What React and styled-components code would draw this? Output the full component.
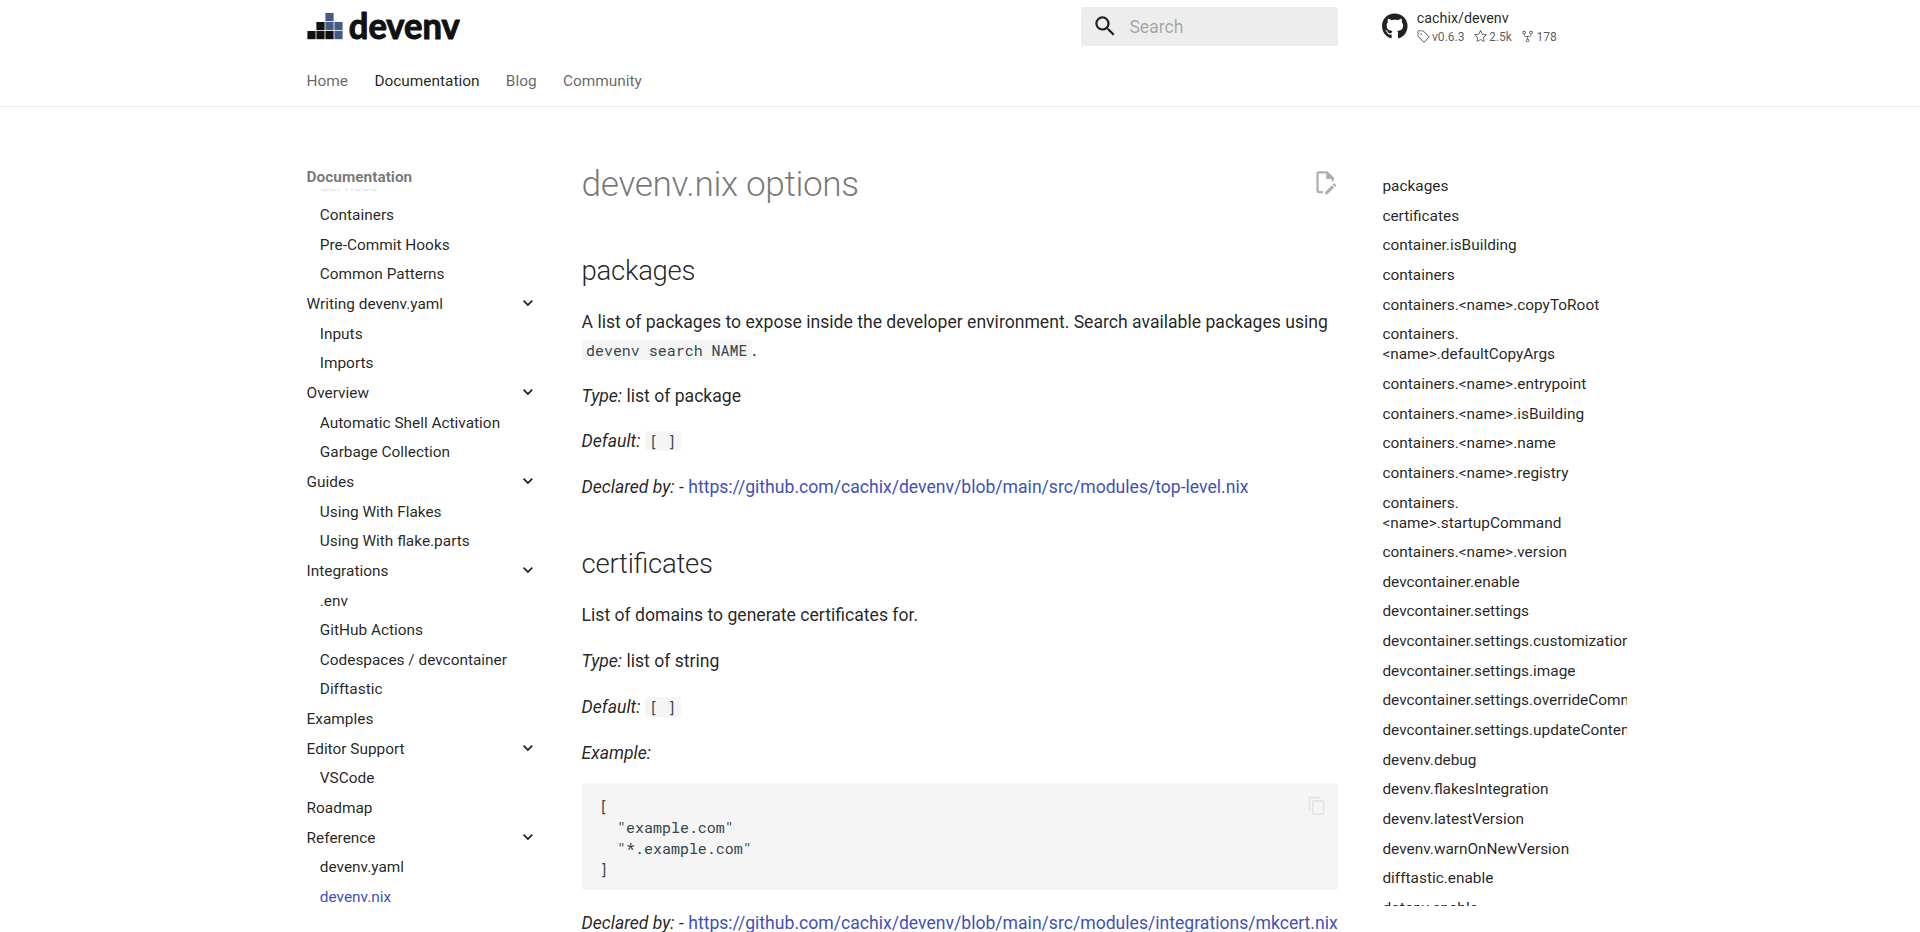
import React from "react";
import styled, { createGlobalStyle, css } from "styled-components";
import { FaGithub } from "react-icons/fa";
import { GoTag, GoStar, GoRepoForked } from "react-icons/go";

const GlobalStyle = createGlobalStyle`
  html { font-size: 22px; }
  body {
    margin: 0;
    height: 932px;
    overflow: hidden;
    background: #fff;
    color: rgba(0, 0, 0, 0.87);
    font-family: Roboto, "Liberation Sans", sans-serif;
    font-feature-settings: "kern", "liga";
    -webkit-font-smoothing: antialiased;
  }
  *, *::before, *::after { box-sizing: border-box; }
  a { color: inherit; text-decoration: none; }
`;

const Page = styled.div`
  height: 932px;
  overflow: hidden;
`;

const Grid = styled.div`
  width: 61rem;
  margin: 0 auto;
`;

const Header = styled.header`
  height: 4.8rem;
  box-shadow: 0 0.05rem 0 rgba(0, 0, 0, 0.07);
`;

const HeaderBar = styled(Grid)`
  display: flex;
  align-items: center;
  height: 2.4rem;
  padding: 0 0.8rem;
`;

const Logo = styled.svg`
  display: block;
  width: 164px;
  height: 36px;
  margin-right: auto;
  overflow: visible;
`;

const LogoText = styled.text`
  font-family: Lato, sans-serif;
  font-weight: 700;
  font-size: 36px;
  fill: #111;
  stroke: #111;
  stroke-width: 1.1px;
  stroke-linejoin: round;
`;

const SearchBox = styled.div`
  display: flex;
  align-items: center;
  width: 11.7rem;
  height: 1.8rem;
  padding-left: 0.5rem;
  gap: 0.5rem;
  border-radius: 0.1rem;
  background: rgba(0, 0, 0, 0.07);
  font-size: 0.8rem;
  color: rgba(0, 0, 0, 0.32);
`;

const Placeholder = styled.span`
  padding-top: 0.4px;
`;

const Icon = styled.svg`
  display: block;
  flex: none;
  width: ${(p) => p.$size || "1.2rem"};
  height: ${(p) => p.$size || "1.2rem"};
  fill: ${(p) => p.$color || "rgba(0, 0, 0, 0.87)"};
`;

const Source = styled.a`
  display: flex;
  align-items: center;
  width: 10.6rem;
  margin-left: 2rem;
  margin-right: -0.1rem;
  gap: 0.4rem;
  svg.mark { width: 25.6px; height: 26.4px; }
`;

const Repo = styled.div`
  padding-top: 2px;
`;

const RepoName = styled.div`
  font-size: 0.65rem;
  line-height: 18px;
`;

const Facts = styled.ul`
  display: flex;
  gap: 0.42rem;
  margin: 1px 0 -1px;
  padding: 0;
  list-style: none;
  font-size: 0.55rem;
  line-height: 18px;
  opacity: 0.75;
`;

const Fact = styled.li`
  display: flex;
  align-items: center;
  svg { width: 0.6rem; height: 0.6rem; margin-right: 2px; margin-top: -2px; }
`;

const Tabs = styled(Grid)`
  display: flex;
  gap: 1.2rem;
  height: 2.4rem;
  padding: 0 0.8rem;
`;

const Tab = styled.a`
  margin-top: calc(0.8rem + 1px);
  font-size: 0.7rem;
  line-height: 1.3;
  opacity: ${(p) => (p.$active ? 1 : 0.7)};
`;

const Main = styled(Grid)`
  display: flex;
  height: calc(932px - 4.8rem);
  padding-top: 1.5rem;
`;

const Sidebar = styled.aside`
  flex: none;
  width: 12.1rem;
  padding: 1.2rem 0.2rem 1.2rem 0.8rem;
  font-size: 0.7rem;
  line-height: 1.3;
`;

const SidebarScroll = styled.nav`
  height: 741px;
  padding-top: 1.5px;
  overflow: hidden;
`;

const NavTitle = styled.div`
  position: relative;
  z-index: 1;
  padding-top: 1px;
  background: #fff;
  box-shadow: 0 0 0.4rem 0.3rem #fff;
  font-weight: 700;
  color: rgba(0, 0, 0, 0.54);
`;

const NavList = styled.ul`
  margin: ${(p) => (p.$scrolled ? "-21.6px 0 0" : 0)};
  padding: 0;
  list-style: none;
`;

const NavItem = styled.li`
  display: flex;
  justify-content: space-between;
  margin-top: 0.625em;
  padding: 0 0.6rem 0 ${(p) => (p.$nested ? "0.6rem" : 0)};
  ${(p) => p.$active && css`color: #4051b5;`}
`;

const Chevron = styled(Icon)`
  margin-top: -0.7px;
  transform: rotate(90deg);
`;

const TocItem = styled.li`
  width: 10.7rem;
  margin-top: 0.625em;
`;

const Article = styled.article`
  flex: 1;
  min-width: 0;
  padding: calc(1rem + 1.3px) 1.2rem 0;
  font-size: 0.8rem;
  line-height: 1.6;
`;

const TitleRow = styled.div`
  display: flex;
  justify-content: space-between;
  align-items: flex-start;
  svg { margin-top: 0.34rem; }
`;

const Title = styled.h1`
  margin: 0;
  font-size: 2em;
  font-weight: 300;
  line-height: 1.3;
  letter-spacing: -0.01em;
  color: rgba(0, 0, 0, 0.54);
`;

const Section = styled.h2`
  margin: 1.6em 0 0.64em;
  font-size: 1.5625em;
  font-weight: 300;
  line-height: 1.4;
  letter-spacing: -0.01em;
`;

const Text = styled.p`
  margin: 1em 0;
`;

const Link = styled.a`
  && { color: #4051b5; }
`;

const mono = css`
  font-family: "Roboto Mono", "DejaVu Sans Mono", monospace;
  font-size: 0.85em;
  color: #36464e;
  background: #f5f5f5;
  border-radius: 0.1rem;
`;

const Code = styled.code`
  ${mono}
  padding: 0 0.294em;
`;

const CodeBlock = styled.div`
  ${mono}
  display: flex;
  justify-content: space-between;
  align-items: flex-start;
  margin: -1.2px 0 calc(1.176em + 1.6px);
  padding: 0.772em 0.8em 0.772em 1.176em;
  line-height: 1.4;
  svg { margin-top: 1px; }
`;

const Pre = styled.pre`
  margin: 1.4px 0 -1.4px;
  font: inherit;
`;

const NAV = [
  { label: "Services", nested: true },
  { label: "Containers", nested: true },
  { label: "Pre-Commit Hooks", nested: true },
  { label: "Common Patterns", nested: true },
  { label: "Writing devenv.yaml", open: true },
  { label: "Inputs", nested: true },
  { label: "Imports", nested: true },
  { label: "Overview", open: true },
  { label: "Automatic Shell Activation", nested: true },
  { label: "Garbage Collection", nested: true },
  { label: "Guides", open: true },
  { label: "Using With Flakes", nested: true },
  { label: "Using With flake.parts", nested: true },
  { label: "Integrations", open: true },
  { label: ".env", nested: true },
  { label: "GitHub Actions", nested: true },
  { label: "Codespaces / devcontainer", nested: true },
  { label: "Difftastic", nested: true },
  { label: "Examples" },
  { label: "Editor Support", open: true },
  { label: "VSCode", nested: true },
  { label: "Roadmap" },
  { label: "Reference", open: true },
  { label: "devenv.yaml", nested: true },
  { label: "devenv.nix", nested: true, active: true },
];

const TOC = [
  "packages",
  "certificates",
  "container.isBuilding",
  "containers",
  "containers.<name>.copyToRoot",
  "containers.<name>.defaultCopyArgs",
  "containers.<name>.entrypoint",
  "containers.<name>.isBuilding",
  "containers.<name>.name",
  "containers.<name>.registry",
  "containers.<name>.startupCommand",
  "containers.<name>.version",
  "devcontainer.enable",
  "devcontainer.settings",
  "devcontainer.settings.customizations",
  "devcontainer.settings.image",
  "devcontainer.settings.overrideCommand",
  "devcontainer.settings.updateContentCommand",
  "devenv.debug",
  "devenv.flakesIntegration",
  "devenv.latestVersion",
  "devenv.warnOnNewVersion",
  "difftastic.enable",
  "dotenv.enable",
];

const BLOCKS = [
  [0, 18, "#111"],
  [9, 18, "#111"],
  [18, 18, "#111"],
  [27, 18, "#425b87"],
  [9, 9, "#111"],
  [18, 9, "#425b87"],
  [27, 9, "#425b87"],
  [18, 0, "#425b87"],
];

const MAGNIFY =
  "M9.5 3A6.5 6.5 0 0 1 16 9.5c0 1.61-.59 3.09-1.56 4.23l.27.27h.79l5 5-1.5 1.5-5-5v-.79l-.27-.27A6.516 6.516 0 0 1 9.5 16 6.5 6.5 0 0 1 3 9.5 6.5 6.5 0 0 1 9.5 3m0 2C7 5 5 7 5 9.5S7 14 9.5 14 14 12 14 9.5 12 5 9.5 5Z";
const CHEVRON = "M8.59 16.58 13.17 12 8.59 7.41 10 6l6 6-6 6-1.41-1.42Z";
const FILE_EDIT =
  "M10 20H6V4h7v5h5v3.1l2-2V8l-6-6H6c-1.1 0-2 .9-2 2v16c0 1.1.9 2 2 2h4v-2m10.2-7c.1 0 .3.1.4.2l1.3 1.3c.2.2.2.6 0 .8l-1 1-2.1-2.1 1-1c.1-.1.2-.2.4-.2m0 3.9L14.1 23H12v-2.1l6.1-6.1 2.1 2.1Z";
const COPY =
  "M19 21H8V7h11m0-2H8a2 2 0 0 0-2 2v14a2 2 0 0 0 2 2h11a2 2 0 0 0 2-2V7a2 2 0 0 0-2-2m-3-4H4a2 2 0 0 0-2 2v14h2V3h12V1Z";

const EXAMPLE = `[
  "example.com"
  "*.example.com"
]`;

export default function App() {
  return (
    <Page>
      <GlobalStyle />
      <Header>
        <HeaderBar>
          <Logo viewBox="0 0 164 36" aria-label="devenv">
            {BLOCKS.map(([x, y, fill]) => (
              <rect key={`${x}-${y}`} x={x + 0.4} y={y + 5} width="8.2" height="8.2" fill={fill} />
            ))}
            <LogoText x="41.8" y="30.5" textLength="111" lengthAdjust="spacingAndGlyphs">
              devenv
            </LogoText>
          </Logo>
          <SearchBox>
            <Icon viewBox="0 0 24 24"><path d={MAGNIFY} /></Icon>
            <Placeholder>Search</Placeholder>
          </SearchBox>
          <Source>
            <FaGithub className="mark" />
            <Repo>
              <RepoName>cachix/devenv</RepoName>
              <Facts>
                <Fact><GoTag />v0.6.3</Fact>
                <Fact><GoStar />2.5k</Fact>
                <Fact><GoRepoForked />178</Fact>
              </Facts>
            </Repo>
          </Source>
        </HeaderBar>
        <Tabs>
          <Tab>Home</Tab>
          <Tab $active>Documentation</Tab>
          <Tab>Blog</Tab>
          <Tab>Community</Tab>
        </Tabs>
      </Header>
      <Main>
        <Sidebar>
          <SidebarScroll>
            <NavTitle>Documentation</NavTitle>
            <NavList $scrolled>
              {NAV.map((item) => (
                <NavItem key={item.label + (item.nested ? "-n" : "")} $nested={item.nested} $active={item.active}>
                  {item.label}
                  {item.open && (
                    <Chevron $size="0.9rem" viewBox="0 0 24 24"><path d={CHEVRON} /></Chevron>
                  )}
                </NavItem>
              ))}
            </NavList>
          </SidebarScroll>
        </Sidebar>
        <Article>
          <TitleRow>
            <Title>devenv.nix options</Title>
            <Icon $color="rgba(0, 0, 0, 0.32)" viewBox="0 0 24 24"><path d={FILE_EDIT} /></Icon>
          </TitleRow>
          <Section>packages</Section>
          <Text>
            A list of packages to expose inside the developer environment. Search available packages using{" "}
            <Code>devenv search NAME</Code>.
          </Text>
          <Text><em>Type:</em> list of package</Text>
          <Text><em>Default:</em> <Code>[ ]</Code></Text>
          <Text>
            <em>Declared by:</em> - <Link>https://github.com/cachix/devenv/blob/main/src/modules/top-level.nix</Link>
          </Text>
          <Section>certificates</Section>
          <Text>List of domains to generate certificates for.</Text>
          <Text><em>Type:</em> list of string</Text>
          <Text><em>Default:</em> <Code>[ ]</Code></Text>
          <Text><em>Example:</em></Text>
          <CodeBlock>
            <Pre>{EXAMPLE}</Pre>
            <Icon $size="0.9rem" $color="rgba(0, 0, 0, 0.07)" viewBox="0 0 24 24"><path d={COPY} /></Icon>
          </CodeBlock>
          <Text>
            <em>Declared by:</em> - <Link>https://github.com/cachix/devenv/blob/main/src/modules/integrations/mkcert.nix</Link>
          </Text>
        </Article>
        <Sidebar>
          <SidebarScroll>
            <NavList>
              {TOC.map((label) => (
                <TocItem key={label}>{label}</TocItem>
              ))}
            </NavList>
          </SidebarScroll>
        </Sidebar>
      </Main>
    </Page>
  );
}
